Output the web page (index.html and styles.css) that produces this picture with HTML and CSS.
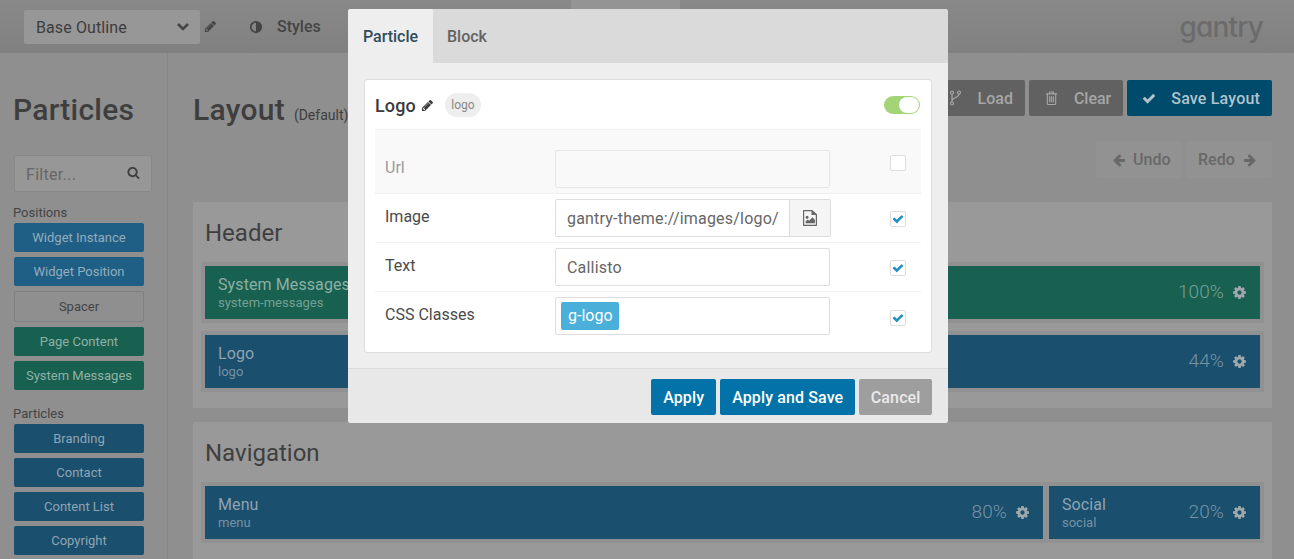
FILE: index.html
```html
<!DOCTYPE html>
<html lang="en">
<head>
<meta charset="utf-8">
<title>Gantry Layout</title>
<link rel="stylesheet" href="styles.css">
</head>
<body>
<svg class="sprite" xmlns="http://www.w3.org/2000/svg">
  <symbol id="i-pencil" viewBox="0 0 1792 1792"><path d="M491 1536l91-91-235-235-91 91v107h128v128h107zm523-928q0-22-22-22-10 0-17 7l-542 542q-7 7-7 17 0 22 22 22 10 0 17-7l542-542q7-7 7-17zm-54-192l416 416-832 832h-416v-416zm683 96q0 53-37 90l-166 166-416-416 166-165q36-38 90-38 53 0 91 38l235 234q37 39 37 91z"/></symbol>
  <symbol id="i-search" viewBox="0 0 1792 1792"><path d="M1216 832q0-185-131.500-316.500t-316.500-131.500-316.500 131.500-131.500 316.500 131.500 316.500 316.500 131.500 316.500-131.500 131.500-316.500zm512 832q0 52-38 90t-90 38q-54 0-90-38l-343-342q-179 124-399 124-143 0-273.500-55.500t-225-150-150-225-55.500-273.500 55.500-273.500 150-225 225-150 273.500-55.500 273.500 55.500 225 150 150 225 55.500 273.500q0 220-124 399l343 343q37 37 37 90z"/></symbol>
  <symbol id="i-check" viewBox="0 0 1792 1792"><path d="M1671 566q0 40-28 68l-724 724-136 136q-28 28-68 28t-68-28l-136-136-362-362q-28-28-28-68t28-68l136-136q28-28 68-28t68 28l294 295 656-657q28-28 68-28t68 28l136 136q28 28 28 68z"/></symbol>
  <symbol id="i-left" viewBox="0 0 1792 1792"><path d="M1664 896v128q0 53-32.500 90.500t-84.500 37.500h-704l293 294q38 36 38 90t-38 90l-75 76q-37 37-90 37-52 0-91-37l-651-652q-37-37-37-90 0-52 37-91l651-650q38-38 91-38 52 0 90 38l75 74q38 38 38 91t-38 91l-293 293h704q52 0 84.500 37.500t32.500 90.500z"/></symbol>
  <symbol id="i-right" viewBox="0 0 1792 1792"><path d="M1600 960q0 54-37 91l-651 651q-39 37-91 37-51 0-90-37l-75-75q-38-38-38-91t38-91l293-293h-704q-52 0-84.500-37.500t-32.500-90.500v-128q0-53 32.500-90.500t84.500-37.500h704l-293-294q-38-36-38-90t38-90l75-75q38-38 90-38 53 0 91 38l651 651q37 35 37 90z"/></symbol>
  <symbol id="i-cog" viewBox="0 0 1792 1792"><path d="M1152 896q0-106-75-181t-181-75-181 75-75 181 75 181 181 75 181-75 75-181zm512-109v222q0 12-8 23t-20 13l-185 28q-19 54-39 91 35 50 107 138 10 12 10 25t-9 23q-27 37-99 108t-94 71q-12 0-26-9l-138-108q-44 23-91 38-16 136-29 186-7 28-36 28h-222q-14 0-24.500-8.500t-11.500-21.500l-28-184q-49-16-90-37l-141 107q-10 9-25 9-14 0-25-11-126-114-165-168-7-10-7-23 0-12 8-23 15-21 51-66.500t54-70.500q-27-50-41-99l-183-27q-13-2-21-12.500t-8-23.500v-222q0-12 8-23t19-13l186-28q14-46 39-92-40-57-107-138-10-12-10-24 0-10 9-23 26-36 98.500-107.500t94.500-71.500q13 0 26 10l138 107q44-23 91-38 16-136 29-186 7-28 36-28h222q14 0 24.500 8.500t11.500 21.500l28 184q49 16 90 37l142-107q9-9 24-9 13 0 25 10 129 119 165 170 7 8 7 22 0 12-8 23-15 21-51 66.500t-54 70.500q26 50 41 98l183 28q13 2 21 12.500t8 23.500z"/></symbol>
  <symbol id="i-adjust" viewBox="0 0 16 16"><path fill-rule="evenodd" d="M8 1a7 7 0 1 0 0 14A7 7 0 0 0 8 1zm0 2v10a5 5 0 0 1 0-10z"/></symbol>
  <symbol id="i-chevron" viewBox="0 0 14 10"><path d="M2 2l5 5 5-5" fill="none" stroke="currentColor" stroke-width="2.600"/></symbol>
  <symbol id="i-fork" viewBox="0 0 12 16"><g fill="none" stroke="currentColor" stroke-width="1.200"><circle cx="2.500" cy="2.500" r="1.500"/><circle cx="9.500" cy="2.500" r="1.500"/><circle cx="2.500" cy="13.500" r="1.500"/><path d="M2.500 4v8M9.500 4c0 4-7 3.500-7 7"/></g></symbol>
  <symbol id="i-trash" viewBox="0 0 14 16"><g fill="none" stroke="currentColor" stroke-width="1.200"><path d="M1 3.500h12M2.500 3.500v10.300c0 .8.500 1.200 1 1.200h7c.5 0 1-.4 1-1.200V3.500M5 3.500V1.500h4v2M5 6v6.500M7 6v6.500M9 6v6.500"/></g></symbol>
  <symbol id="i-file" viewBox="0 0 14 16"><path fill-rule="evenodd" d="M1 0h8.200L14 4.300V15c0 .6-.4 1-1 1H1c-.6 0-1-.4-1-1V1c0-.6.400-1 1-1zm.2 1.200v13.600h11.600V5H8.500V1.200zM2.600 7.200a1.500 1.500 0 1 1 3 0 1.500 1.500 0 0 1-3 0zM2.600 13.300v-1.800l2.200-2 1.300 1.300 3.400-3.600 2.400 2.800v3.300z"/></symbol>
</svg>

<header class="topbar">
  <div class="select"><span>Base Outline</span><svg class="chev"><use href="#i-chevron"/></svg></div>
  <svg class="top-pencil"><use href="#i-pencil"/></svg>
  <a class="top-link"><svg class="adjust"><use href="#i-adjust"/></svg>Styles</a>
  <span class="top-tab"></span>
  <span class="wordmark">gantry</span>
</header>

<div class="page">
  <aside class="sidebar">
    <h1 class="side-title">Particles</h1>
    <div class="filter"><span>Filter...</span><svg class="filter-icon"><use href="#i-search"/></svg></div>
    <div class="side-label">Positions</div>
    <div class="chips">
      <div class="chip chip-light">Widget Instance</div>
      <div class="chip chip-light">Widget Position</div>
      <div class="chip chip-spacer">Spacer</div>
      <div class="chip chip-green">Page Content</div>
      <div class="chip chip-green">System Messages</div>
    </div>
    <div class="side-label side-label-second">Particles</div>
    <div class="chips">
      <div class="chip">Branding</div>
      <div class="chip">Contact</div>
      <div class="chip">Content List</div>
      <div class="chip">Copyright</div>
    </div>
  </aside>

  <main class="main">
    <div class="title-row">
      <h1 class="main-title">Layout <small>(Default)</small></h1>
      <div class="actions">
        <a class="btn btn-dark"><svg class="btn-icon"><use href="#i-fork"/></svg>Load</a>
        <a class="btn btn-dark"><svg class="btn-icon"><use href="#i-trash"/></svg>Clear</a>
        <a class="btn btn-save"><svg class="btn-icon save-check"><use href="#i-check"/></svg>Save Layout</a>
      </div>
    </div>
    <div class="history">
      <a class="hbtn hbtn-undo"><svg class="arrow"><use href="#i-left"/></svg>Undo</a>
      <a class="hbtn hbtn-redo">Redo<svg class="arrow"><use href="#i-right"/></svg></a>
    </div>

    <section class="section">
      <h2 class="section-title">Header</h2>
      <div class="row">
        <div class="block block-green grow">
          <div class="block-name"><b>System Messages</b><i>system-messages</i></div>
          <span class="pct">100%</span><svg class="cog"><use href="#i-cog"/></svg>
        </div>
      </div>
      <div class="row">
        <div class="block grow">
          <div class="block-name"><b>Logo</b><i>logo</i></div>
          <span class="pct">44%</span><svg class="cog"><use href="#i-cog"/></svg>
        </div>
      </div>
    </section>

    <section class="section section-nav">
      <h2 class="section-title">Navigation</h2>
      <div class="row">
        <div class="block grow">
          <div class="block-name"><b>Menu</b><i>menu</i></div>
          <span class="pct">80%</span><svg class="cog"><use href="#i-cog"/></svg>
        </div>
        <div class="block block-social">
          <div class="block-name"><b>Social</b><i>social</i></div>
          <span class="pct">20%</span><svg class="cog"><use href="#i-cog"/></svg>
        </div>
      </div>
    </section>
  </main>
</div>

<div class="modal">
  <div class="tabs">
    <div class="tab tab-active">Particle</div>
    <div class="tab">Block</div>
  </div>
  <div class="modal-body">
    <div class="card">
      <div class="card-head">
        <span class="card-title">Logo</span>
        <svg class="card-pencil"><use href="#i-pencil"/></svg>
        <span class="badge">logo</span>
        <span class="toggle"><span class="knob"></span></span>
      </div>
      <div class="field field-off">
        <label class="field-label">Url</label>
        <div class="input input-off"></div>
        <span class="cbox cbox-off"></span>
      </div>
      <div class="field">
        <label class="field-label">Image</label>
        <div class="input-group">
          <div class="input input-joined">gantry-theme://images/logo/</div>
          <div class="addon"><svg class="file"><use href="#i-file"/></svg></div>
        </div>
        <span class="cbox cbox-group"><svg class="tick"><use href="#i-check"/></svg></span>
      </div>
      <div class="field">
        <label class="field-label">Text</label>
        <div class="input">Callisto</div>
        <span class="cbox"><svg class="tick"><use href="#i-check"/></svg></span>
      </div>
      <div class="field field-last">
        <label class="field-label">CSS Classes</label>
        <div class="input input-tags"><span class="tag">g-logo</span></div>
        <span class="cbox cbox-last"><svg class="tick"><use href="#i-check"/></svg></span>
      </div>
    </div>
  </div>
  <div class="modal-foot">
    <a class="mbtn">Apply</a>
    <a class="mbtn">Apply and Save</a>
    <a class="mbtn mbtn-cancel">Cancel</a>
  </div>
</div>
</body>
</html>
```

FILE: styles.css
```css
* { box-sizing: border-box; }
html, body { margin: 0; height: 559px; overflow: hidden; }
body {
  background: #8f8f8f;
  font-family: Roboto, "Liberation Sans", sans-serif;
  color: #3f3f3f;
  position: relative;
}
.sprite { display: none; }
svg { display: block; fill: currentColor; flex: none; }

/* top bar */
.topbar {
  height: 53px;
  display: flex;
  align-items: center;
  padding-left: 24px;
  background: linear-gradient(#898989, #808080);
  position: relative;
}
.select {
  width: 176px;
  height: 34px;
  background: #979797;
  border-radius: 2px;
  display: flex;
  align-items: center;
  justify-content: space-between;
  padding: 2px 10px 0 12px;
  font-size: 16px;
  letter-spacing: 0.1px;
  color: #3d3d3d;
}
.chev { width: 14px; height: 10px; color: #454545; margin-top: -2px; }
.top-pencil { width: 13px; height: 13px; margin-left: 4px; color: #444; }
.top-link { display: flex; align-items: center; margin-left: 32px; font-size: 16px; font-weight: 500; color: #444; }
.adjust { width: 14px; height: 14px; margin-right: 14px; }
.top-tab { position: absolute; left: 571px; top: 0; width: 109px; height: 9px; background: #949494; }
.wordmark {
  margin-left: auto;
  margin-right: 31px;
  font-family: Inter, sans-serif;
  font-feature-settings: "cv11";
  font-size: 28px;
  font-weight: 500;
  letter-spacing: -0.8px;
  line-height: 34px;
  color: #6b6b6b;
}

/* page */
.page { display: flex; height: 506px; overflow: hidden; }
.sidebar {
  width: 168px;
  flex: none;
  padding: 37px 0 0 14px;
  border-right: 1px solid #878787;
}
.side-title { margin: 0 0 0 -1px; font-size: 30px; font-weight: 500; line-height: 40px; letter-spacing: 0.25px; color: #3e3e3e; }
.filter {
  width: 138px;
  height: 37px;
  margin-top: 25px;
  background: #979797;
  border: 1px solid #888;
  border-radius: 2px;
  display: flex;
  align-items: center;
  justify-content: space-between;
  padding: 1px 11px 0 11px;
  font-size: 16px;
  letter-spacing: 0.3px;
  color: #666;
}
.filter-icon { width: 13px; height: 13px; color: #3f3f3f; margin-top: -4px; }
.side-label { margin: 13px 0 0 -1px; font-size: 13px; line-height: 15px; color: #444; }
.side-label-second { margin-top: 16px; }
.chips { display: flex; flex-direction: column; gap: 5px; margin-top: 3px; }
.chip {
  width: 130px;
  height: 29px;
  background: #1a4f6e;
  border-radius: 2px;
  font-size: 13px;
  line-height: 29px;
  text-align: center;
  color: #8fa5b3;
}
.chip-light { background: #205f85; color: #93acbc; }
.chip-green { background: #186050; color: #8fb0a6; }
.chip-spacer { height: 31px; line-height: 29px; background: #8f8f8f; border: 1px solid #808080; color: #444; }

/* main */
.main { flex: 1; padding: 27px 22px 0 25px; min-width: 0; }
.title-row { display: flex; justify-content: space-between; height: 36px; }
.main-title { margin: 0; font-size: 30px; font-weight: 500; line-height: 60px; letter-spacing: 0.3px; color: #3e3e3e; height: 36px; }
.main-title small { font-size: 14px; font-weight: 400; margin-left: 1px; letter-spacing: 0; }
.actions { display: flex; gap: 4px; }
.btn {
  height: 36px;
  border-radius: 2px;
  display: flex;
  align-items: center;
  padding: 0 12px 0 16px;
  font-size: 16px;
  font-weight: 500;
}
.btn-dark { background: #616161; color: #a6a6a6; }
.btn-save { background: #004a6b; color: #b2c3cd; padding: 0 12px 0 15px; letter-spacing: 0.18px; }
.btn-icon { width: 13px; height: 16px; margin-right: 16px; }
.save-check { width: 14px; height: 15px; margin-right: 15px; }
.history { display: flex; justify-content: flex-end; gap: 4px; margin-top: 25px; }
.hbtn {
  width: 86px;
  height: 37px;
  background: #929292;
  border-radius: 2px;
  display: flex;
  align-items: center;
  gap: 8px;
  font-size: 16px;
  font-weight: 500;
  color: #686868;
}
.hbtn-undo { padding-left: 16px; gap: 7px; }
.hbtn-redo { padding-left: 12px; }
.arrow { width: 14px; height: 14px; }
.section { background: #999; margin-top: 24px; padding: 15px 8px 16px; }
.section-nav { margin-top: 14px; height: 200px; }
.section-title { margin: 0 0 13px 4px; font-size: 24px; font-weight: 400; line-height: 32px; color: #3f3f3f; }
.row { display: flex; gap: 6px; background: #919191; padding: 4px; margin-bottom: 8px; }
.row:last-child { margin-bottom: 0; }
.block {
  height: 53px;
  background: #1a4f6e;
  color: #8ea3b1;
  display: flex;
  align-items: center;
  padding: 0 13px;
}
.block-green { background: #186050; color: #8cb0a5; }
.grow { flex: 1; }
.block-social { width: 211px; }
.block-name { margin: 1px auto 0 0; }
.block-name b { display: block; font-size: 16px; font-weight: 400; line-height: 19px; letter-spacing: 0.1px; }
.block-name i { display: block; font-style: normal; font-size: 13px; line-height: 16px; margin-top: 1px; opacity: .8; }
.pct { font-size: 19px; font-weight: 300; letter-spacing: 0.1px; opacity: .8; margin-top: -2px; }
.cog { width: 15px; height: 15px; margin-left: 8px; color: #a0a8ab; }

/* modal */
.modal {
  position: absolute;
  left: 348px;
  top: 9px;
  width: 600px;
  height: 414px;
  background: #eee;
  border-radius: 3px;
  overflow: hidden;
  display: flex;
  flex-direction: column;
}
.tabs { display: flex; height: 54px; background: #dadada; flex: none; }
.tab { padding: 0 14px; font-size: 16px; line-height: 56px; font-weight: 500; color: #636363; }
.tab-active { width: 85px; background: #eee; color: #2f4b5c; text-align: center; padding: 0; }
.modal-body { height: 305px; padding: 16px 16px 0; flex: none; }
.card {
  height: 274px;
  background: #fff;
  border: 1px solid #ddd;
  border-radius: 3px;
  padding: 0 10px;
}
.card-head { display: flex; align-items: center; height: 50px; border-bottom: 1px solid #eee; padding-top: 1px; }
.card-title { font-size: 18px; font-weight: 500; color: #3b3b3b; letter-spacing: 0.1px; }
.card-pencil { width: 13px; height: 13px; margin-left: 5px; color: #3b3b3b; }
.badge {
  margin-left: 11px;
  height: 24px;
  padding: 0 6.5px;
  background: #eee;
  border-radius: 12px;
  font-size: 12px;
  line-height: 24px;
  color: #888;
}
.toggle {
  margin-left: auto;
  margin-right: 1px;
  width: 36px;
  height: 18px;
  background: #a3d477;
  border-radius: 9px;
  padding: 1px;
  display: flex;
  justify-content: flex-end;
}
.knob { width: 20px; height: 16px; background: #fff; border-radius: 8px; }
.field {
  display: flex;
  align-items: center;
  height: 49px;
  padding-left: 10px;
  border-bottom: 1px solid #f2f2f2;
  font-size: 16px;
  color: #4a4a4a;
}
.field-last { height: 48px; border-bottom: 0; }
.field-off { height: 64px; padding-top: 15px; background: #f9f9f9; border-bottom-color: #efefef; }
.field-label { width: 170px; margin-top: -3px; flex: none; }
.field-off .field-label { color: #9b9b9b; margin-top: -3px; }
.input {
  width: 275px;
  height: 38px;
  background: #fff;
  border: 1px solid #ddd;
  border-radius: 2px;
  padding: 0 11px;
  line-height: 37px;
  font-size: 16px;
  color: #666;
  letter-spacing: 0.2px;
  white-space: nowrap;
  overflow: hidden;
}
.input-off { background: #f9f9f9; border-color: #e6e6e6; }
.input-group { display: flex; width: 276px; }
.input-joined { width: 235px; border-radius: 2px 0 0 2px; flex: none; }
.addon {
  flex: 1;
  background: #f5f5f5;
  border: 1px solid #ddd;
  border-left: 0;
  border-radius: 0 2px 2px 0;
  display: flex;
  align-items: center;
  justify-content: center;
  color: #666;
}
.file { width: 14px; height: 16px; }
.input-tags { padding: 4px 5px; line-height: 1; }
.tag {
  display: inline-block;
  height: 28px;
  padding: 0 6px 0 7px;
  background: #4ab0d9;
  border-radius: 2px;
  font-size: 16px;
  line-height: 28px;
  color: #fff;
  letter-spacing: 0;
}
.cbox {
  width: 16px;
  height: 16px;
  margin: 2px 0 0 60px;
  background: #fff;
  border: 1px solid #ddd;
  border-radius: 2px;
  display: flex;
  align-items: center;
  justify-content: center;
  color: #1f8fc6;
}
.cbox-off { margin-top: -12px; }
.cbox-group { margin-left: 59px; }
.cbox-last { margin-top: 4px; }
.tick { width: 12px; height: 12px; }
.modal-foot {
  flex: 1;
  background: #e8e8e8;
  border-top: 1px solid #dcdcdc;
  display: flex;
  justify-content: flex-end;
  gap: 4px;
  padding: 10px 16px 0;
}
.mbtn {
  height: 36px;
  padding: 0 12px;
  background: #0272a8;
  border-radius: 2px;
  font-size: 16px;
  font-weight: 500;
  line-height: 37px;
  letter-spacing: 0.12px;
  color: #fff;
}
.mbtn-cancel { padding: 0 11.5px; background: #9e9e9e; color: #eaeaea; }
```
